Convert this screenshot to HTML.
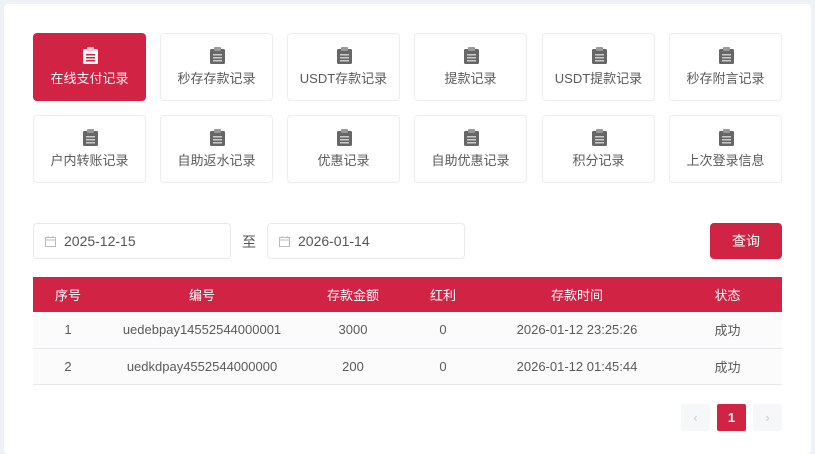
<!DOCTYPE html>
<html><head><meta charset="utf-8"><style>
*{box-sizing:border-box;margin:0;padding:0}
body{width:815px;height:443px;background:#eef1f6;font-family:"Liberation Sans","Noto Sans CJK SC",sans-serif;overflow:hidden;position:relative}
.panel{position:absolute;left:4px;top:4px;width:807px;height:450px;background:#fff;border-radius:4px}
.tile{position:absolute;width:113px;height:68px;border:1px solid #ebedf0;border-radius:4px;background:#fff;color:#5a5a5a;font-size:13px;text-align:center}
.tile svg{position:absolute;left:49px;top:13px}
.tile span{position:absolute;left:0;right:0;top:34px}
.tile.act{background:#d12343;border-color:#d12343;color:#fff}
.inp{position:absolute;top:223px;height:36px;width:198px;border:1px solid #e8eaee;border-radius:4px;font-size:14px;color:#555;padding-left:30px;line-height:34px}
.inp svg{position:absolute;left:11px;top:12px}
.btn{position:absolute;left:710px;top:223px;width:72px;height:36px;background:#d12343;border-radius:4px;color:#fff;font-size:14px;text-align:center;line-height:36px}
table{position:absolute;left:33px;top:277px;width:749px;border-collapse:collapse;font-size:13px;color:#5a5a5a}
th{background:#d12343;color:#fff;font-weight:normal;height:35px}
td{height:36px;text-align:center;background:#fbfbfb;border-bottom:1px solid #e6e8ec}
.pg{position:absolute;top:404px;width:29px;height:27px;border-radius:2px;background:#f6f7f9;color:#ccc;text-align:center;line-height:27px;font-size:13px}
</style></head><body>
<div class="panel"></div>
<div class="tile act" style="left:33px;top:33px"><svg width="15" height="17" viewBox="0 0 15 17"><rect x="0" y="2" width="15" height="15" rx="1.5" fill="#fff"/><rect x="4" y="0" width="7" height="4" rx="1" fill="#f3c5cd"/><rect x="3" y="7" width="9" height="1.5" fill="#d12343"/><rect x="3" y="10" width="9" height="1.5" fill="#d12343"/><rect x="3" y="13" width="9" height="1.5" fill="#d12343"/></svg><span>在线支付记录</span></div>
<div class="tile" style="left:160px;top:33px"><svg width="15" height="17" viewBox="0 0 15 17"><rect x="0" y="2" width="15" height="15" rx="1.5" fill="#666"/><rect x="4" y="0" width="7" height="4" rx="1" fill="#999"/><rect x="3" y="7" width="9" height="1.5" fill="#ccc"/><rect x="3" y="10" width="9" height="1.5" fill="#ccc"/><rect x="3" y="13" width="9" height="1.5" fill="#ccc"/></svg><span>秒存存款记录</span></div>
<div class="tile" style="left:287px;top:33px"><svg width="15" height="17" viewBox="0 0 15 17"><rect x="0" y="2" width="15" height="15" rx="1.5" fill="#666"/><rect x="4" y="0" width="7" height="4" rx="1" fill="#999"/><rect x="3" y="7" width="9" height="1.5" fill="#ccc"/><rect x="3" y="10" width="9" height="1.5" fill="#ccc"/><rect x="3" y="13" width="9" height="1.5" fill="#ccc"/></svg><span>USDT存款记录</span></div>
<div class="tile" style="left:414px;top:33px"><svg width="15" height="17" viewBox="0 0 15 17"><rect x="0" y="2" width="15" height="15" rx="1.5" fill="#666"/><rect x="4" y="0" width="7" height="4" rx="1" fill="#999"/><rect x="3" y="7" width="9" height="1.5" fill="#ccc"/><rect x="3" y="10" width="9" height="1.5" fill="#ccc"/><rect x="3" y="13" width="9" height="1.5" fill="#ccc"/></svg><span>提款记录</span></div>
<div class="tile" style="left:542px;top:33px"><svg width="15" height="17" viewBox="0 0 15 17"><rect x="0" y="2" width="15" height="15" rx="1.5" fill="#666"/><rect x="4" y="0" width="7" height="4" rx="1" fill="#999"/><rect x="3" y="7" width="9" height="1.5" fill="#ccc"/><rect x="3" y="10" width="9" height="1.5" fill="#ccc"/><rect x="3" y="13" width="9" height="1.5" fill="#ccc"/></svg><span>USDT提款记录</span></div>
<div class="tile" style="left:669px;top:33px"><svg width="15" height="17" viewBox="0 0 15 17"><rect x="0" y="2" width="15" height="15" rx="1.5" fill="#666"/><rect x="4" y="0" width="7" height="4" rx="1" fill="#999"/><rect x="3" y="7" width="9" height="1.5" fill="#ccc"/><rect x="3" y="10" width="9" height="1.5" fill="#ccc"/><rect x="3" y="13" width="9" height="1.5" fill="#ccc"/></svg><span>秒存附言记录</span></div>
<div class="tile" style="left:33px;top:115px"><svg width="15" height="17" viewBox="0 0 15 17"><rect x="0" y="2" width="15" height="15" rx="1.5" fill="#666"/><rect x="4" y="0" width="7" height="4" rx="1" fill="#999"/><rect x="3" y="7" width="9" height="1.5" fill="#ccc"/><rect x="3" y="10" width="9" height="1.5" fill="#ccc"/><rect x="3" y="13" width="9" height="1.5" fill="#ccc"/></svg><span>户内转账记录</span></div>
<div class="tile" style="left:160px;top:115px"><svg width="15" height="17" viewBox="0 0 15 17"><rect x="0" y="2" width="15" height="15" rx="1.5" fill="#666"/><rect x="4" y="0" width="7" height="4" rx="1" fill="#999"/><rect x="3" y="7" width="9" height="1.5" fill="#ccc"/><rect x="3" y="10" width="9" height="1.5" fill="#ccc"/><rect x="3" y="13" width="9" height="1.5" fill="#ccc"/></svg><span>自助返水记录</span></div>
<div class="tile" style="left:287px;top:115px"><svg width="15" height="17" viewBox="0 0 15 17"><rect x="0" y="2" width="15" height="15" rx="1.5" fill="#666"/><rect x="4" y="0" width="7" height="4" rx="1" fill="#999"/><rect x="3" y="7" width="9" height="1.5" fill="#ccc"/><rect x="3" y="10" width="9" height="1.5" fill="#ccc"/><rect x="3" y="13" width="9" height="1.5" fill="#ccc"/></svg><span>优惠记录</span></div>
<div class="tile" style="left:414px;top:115px"><svg width="15" height="17" viewBox="0 0 15 17"><rect x="0" y="2" width="15" height="15" rx="1.5" fill="#666"/><rect x="4" y="0" width="7" height="4" rx="1" fill="#999"/><rect x="3" y="7" width="9" height="1.5" fill="#ccc"/><rect x="3" y="10" width="9" height="1.5" fill="#ccc"/><rect x="3" y="13" width="9" height="1.5" fill="#ccc"/></svg><span>自助优惠记录</span></div>
<div class="tile" style="left:542px;top:115px"><svg width="15" height="17" viewBox="0 0 15 17"><rect x="0" y="2" width="15" height="15" rx="1.5" fill="#666"/><rect x="4" y="0" width="7" height="4" rx="1" fill="#999"/><rect x="3" y="7" width="9" height="1.5" fill="#ccc"/><rect x="3" y="10" width="9" height="1.5" fill="#ccc"/><rect x="3" y="13" width="9" height="1.5" fill="#ccc"/></svg><span>积分记录</span></div>
<div class="tile" style="left:669px;top:115px"><svg width="15" height="17" viewBox="0 0 15 17"><rect x="0" y="2" width="15" height="15" rx="1.5" fill="#666"/><rect x="4" y="0" width="7" height="4" rx="1" fill="#999"/><rect x="3" y="7" width="9" height="1.5" fill="#ccc"/><rect x="3" y="10" width="9" height="1.5" fill="#ccc"/><rect x="3" y="13" width="9" height="1.5" fill="#ccc"/></svg><span>上次登录信息</span></div>

<div class="inp" style="left:33px"><svg width="11" height="11" viewBox="0 0 11 11"><rect x="0.5" y="1.5" width="10" height="9" fill="none" stroke="#bbb"/><line x1="0.5" y1="4" x2="10.5" y2="4" stroke="#bbb"/><line x1="3" y1="0" x2="3" y2="2" stroke="#bbb"/><line x1="8" y1="0" x2="8" y2="2" stroke="#bbb"/></svg>2025-12-15</div>
<div style="position:absolute;left:242px;top:232px;font-size:14px;color:#555">至</div>
<div class="inp" style="left:267px"><svg width="11" height="11" viewBox="0 0 11 11"><rect x="0.5" y="1.5" width="10" height="9" fill="none" stroke="#bbb"/><line x1="0.5" y1="4" x2="10.5" y2="4" stroke="#bbb"/><line x1="3" y1="0" x2="3" y2="2" stroke="#bbb"/><line x1="8" y1="0" x2="8" y2="2" stroke="#bbb"/></svg>2026-01-14</div>
<div class="btn">查询</div>

<table>
<tr><th style="width:70px">序号</th><th style="width:198px">编号</th><th style="width:104px">存款金额</th><th style="width:76px">红利</th><th style="width:192px">存款时间</th><th style="width:109px">状态</th></tr>
<tr><td>1</td><td>uedebpay14552544000001</td><td>3000</td><td>0</td><td>2026-01-12 23:25:26</td><td>成功</td></tr>
<tr><td>2</td><td>uedkdpay4552544000000</td><td>200</td><td>0</td><td>2026-01-12 01:45:44</td><td>成功</td></tr>
</table>

<div class="pg" style="left:681px">‹</div>
<div class="pg" style="left:717px;background:#d12343;color:#fff;font-weight:bold">1</div>
<div class="pg" style="left:753px">›</div>
</body></html>
